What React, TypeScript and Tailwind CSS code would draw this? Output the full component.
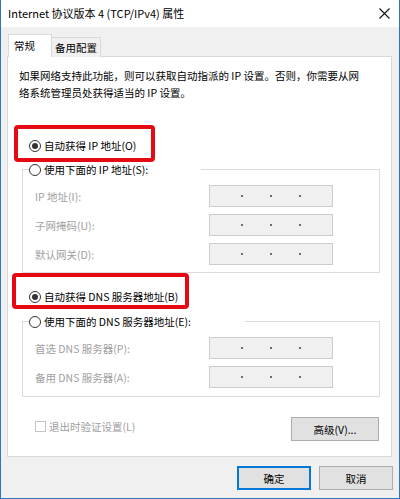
import React from "react";

const font = { fontFamily: '"Noto Sans CJK SC", "Noto Sans", sans-serif' };

const Radio = ({ checked, disabled }: { checked?: boolean; disabled?: boolean }) => (
    <span className="w-[12px] h-[12px] rounded-full border border-[#333333] bg-white flex items-center justify-center shrink-0">
        {checked && <span className="w-[6px] h-[6px] rounded-full bg-[#333333]" />}
    </span>
);

const IpBox = () => (
    <div className="w-[124px] h-[22px] border border-[#cccccc] bg-[#f0f0f0] flex items-center justify-center gap-[27px] text-[#6d6d6d]">
        <span className="w-[2px] h-[2px] bg-[#6d6d6d]" />
        <span className="w-[2px] h-[2px] bg-[#6d6d6d]" />
        <span className="w-[2px] h-[2px] bg-[#6d6d6d]" />
    </div>
);

const Row = ({ label }: { label: string }) => (
    <div className="h-[22px] flex items-center">
        <span className="w-[174px] text-[#a0a0a0] leading-[17px]">{label}</span>
        <IpBox />
    </div>
);

export default function App() {
    return (
        <div
            className="w-[400px] h-[499px] bg-[#f0f0f0] border-x border-b border-[#2f77b8] flex flex-col text-[10.5px] text-black overflow-hidden"
            style={font}
        >
            {/* title bar */}
            <div className="h-[27px] bg-white flex items-center justify-between pl-[7px] pr-[9px] shrink-0">
                <span className="text-[11px] leading-[17px]">Internet 协议版本 4 (TCP/IPv4) 属性</span>
                <svg width="11" height="11" viewBox="0 0 11 11">
                    <path d="M0.5 0.5 L10.5 10.5 M10.5 0.5 L0.5 10.5" stroke="#111" strokeWidth="1.1" />
                </svg>
            </div>

            {/* tabs */}
            <div className="pt-[7px] pl-[7px] flex items-end relative z-10 -mb-[1px]">
                <div className="w-[44px] h-[23px] bg-white border border-b-0 border-[#d9d9d9] pl-[5px] pt-[2px] leading-[17px]">
                    常规
                </div>
                <div className="w-[49px] h-[20px] bg-[#f0f0f0] border border-l-0 border-b-0 border-[#d9d9d9] flex items-center justify-center leading-[17px]">
                    备用配置
                </div>
            </div>

            {/* panel */}
            <div className="ml-[6px] w-[385px] h-[401px] bg-white border border-[#d9d9d9] relative px-[11px] shrink-0">
                <p className="mt-[10px] leading-[17px] whitespace-nowrap">
                    如果网络支持此功能，则可以获取自动指派的 IP 设置。否则，你需要从网
                    <br />
                    络系统管理员处获得适当的 IP 设置。
                </p>

                <div className="mt-[36px] ml-[10px] h-[17px] flex items-center gap-[3px] leading-[17px]">
                    <Radio checked />
                    <span>自动获得 IP 地址(O)</span>
                </div>

                <fieldset className="mt-[7px] ml-[3px] w-[358px] border border-[#dcdcdc]">
                    <legend className="ml-[6px] w-[172px] h-[17px] flex items-center gap-[3px] leading-[17px]">
                        <Radio />
                        <span>使用下面的 IP 地址(S):</span>
                    </legend>
                    <div className="pt-[7px] pb-[7px] pl-[12px] flex flex-col gap-[7px]">
                        <Row label="IP 地址(I):" />
                        <Row label="子网掩码(U):" />
                        <Row label="默认网关(D):" />
                    </div>
                </fieldset>

                <div className="mt-[15px] ml-[10px] h-[17px] flex items-center gap-[3px] leading-[17px]">
                    <Radio checked />
                    <span>自动获得 DNS 服务器地址(B)</span>
                </div>

                <fieldset className="mt-[8px] ml-[3px] w-[358px] border border-[#dcdcdc]">
                    <legend className="ml-[6px] w-[216px] h-[17px] flex items-center gap-[3px] leading-[17px]">
                        <Radio />
                        <span>使用下面的 DNS 服务器地址(E):</span>
                    </legend>
                    <div className="pt-[7px] pb-[8px] pl-[12px] flex flex-col gap-[7px]">
                        <Row label="首选 DNS 服务器(P):" />
                        <Row label="备用 DNS 服务器(A):" />
                    </div>
                </fieldset>

                <div className="mt-[20px] flex items-start justify-between">
                    <div className="ml-[16px] mt-[1px] flex items-center gap-[3px] text-[#a0a0a0] leading-[17px]">
                        <span className="w-[11px] h-[11px] border border-[#c4c4c4] bg-white" />
                        <span>退出时验证设置(L)</span>
                    </div>
                    <button className="mr-[1px] w-[88px] h-[24px] bg-[#e1e1e1] border border-[#adadad] leading-[17px]">
                        高级(V)...
                    </button>
                </div>

                {/* annotation boxes */}
                <div className="absolute left-[6px] top-[68px] w-[141px] h-[37px] border-[4px] border-[#e50914] rounded-[4px]" />
                <div className="absolute left-[4px] top-[216px] w-[177px] h-[36px] border-[4px] border-[#e50914] rounded-[4px]" />
            </div>

            {/* dialog buttons */}
            <div className="mt-[9px] pr-[6px] flex justify-end gap-[8px]">
                <button className="w-[74px] h-[24px] bg-[#e1e1e1] border-2 border-[#0078d7] leading-[17px]">确定</button>
                <button className="w-[74px] h-[24px] bg-[#e1e1e1] border border-[#adadad] leading-[17px]">取消</button>
            </div>
        </div>
    );
}
